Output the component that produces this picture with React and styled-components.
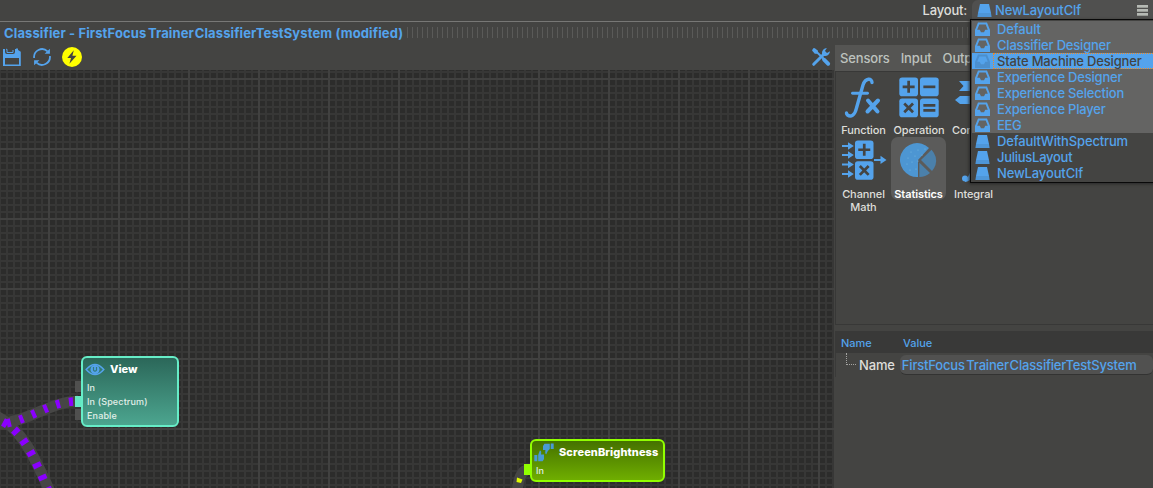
import React from "react";
import styled, { createGlobalStyle } from "styled-components";

const BLUE = "#54a3ec";

const Global = createGlobalStyle`
  * { box-sizing: border-box; }
  body { margin: 0; background: #444442; font-family: Inter, "Liberation Sans", sans-serif; overflow: hidden; }
  svg { display: block; flex: none; }
`;

const Window = styled.div`
  position: relative;
  display: flex;
  flex-direction: column;
  width: 1153px;
  height: 488px;
  overflow: hidden;
  background: #444442;
  color: #dededa;
`;

const Text = styled.span`
  white-space: nowrap;
  font-size: ${(p) => p.$size || 13}px;
  font-weight: ${(p) => p.$weight || 400};
  letter-spacing: ${(p) => p.$track || 0}px;
  color: ${(p) => p.$color || "inherit"};
`;

const Kern = styled.span`
  margin-left: ${(p) => p.$by}px;
`;

const LayoutBar = styled.header`
  display: flex;
  align-items: center;
  justify-content: flex-end;
  height: 22px;
  padding-bottom: 1px;
  border-bottom: 1px solid #787876;
`;

const LayoutSelect = styled.div`
  display: flex;
  align-items: center;
  width: 181px;
  height: 20px;
  margin-left: 5px;
  padding: 0 5px 0 5px;
  gap: 3px;
  border-radius: 6px 0 0 0;
  background: #50504f;
  color: ${BLUE};
  & > :last-child { margin-left: auto; }
`;

const TitleBar = styled.div`
  display: flex;
  align-items: center;
  height: 21px;
  padding-left: 4px;
`;

const Title = styled.div`
  width: 403px;
  white-space: nowrap;
  line-height: 20px;
`;

const Grip = styled.div`
  flex: 1;
  height: 11px;
  background: repeating-linear-gradient(to right, #5a5a58 0 1px, transparent 1px 5px);
`;

const Body = styled.main`
  display: flex;
  flex: 1;
  min-height: 0;
  padding-top: 1px;
`;

const EditorColumn = styled.section`
  display: flex;
  flex-direction: column;
  width: 835px;
`;

const Toolbar = styled.div`
  display: flex;
  align-items: center;
  height: 26px;
  padding: 0 4px 0 2px;
  gap: 10px;
  & > :last-child { margin-left: auto; }
`;

const Canvas = styled.div`
  position: relative;
  flex: 1;
  overflow: hidden;
  border-right: 1px solid #444442;
  background-color: #2c2c2b;
  background-image:
    linear-gradient(to right, #414140 2px, transparent 2px),
    linear-gradient(to bottom, #414140 2px, transparent 2px),
    linear-gradient(to right, #373736 2px, transparent 2px),
    linear-gradient(to bottom, #373736 2px, transparent 2px);
  background-size: 70px 70px, 70px 70px, 7px 7px, 7px 7px;
  background-position: 48px 0, 0 8px, 6px 0, 0 1px;
`;

const Wires = styled.svg`
  position: absolute;
  inset: 0;
`;

const Node = styled.div`
  position: absolute;
  left: ${(p) => p.$x}px;
  top: ${(p) => p.$y}px;
  width: ${(p) => p.$w}px;
  height: ${(p) => p.$h}px;
  padding: 0 0 0 4px;
  border: 2px solid ${(p) => p.$line};
  border-radius: 6px;
  background: linear-gradient(${(p) => p.$from}, ${(p) => p.$to});
  color: #fff;
`;

const NodeHead = styled.div`
  display: flex;
  align-items: center;
  height: 22px;
  gap: 5px;
  margin-left: -2px;
`;

const NodeRow = styled.div`
  display: flex;
  align-items: center;
  height: 14px;
  color: #e2efe9;
`;

const Port = styled.i`
  position: absolute;
  left: ${(p) => p.$x}px;
  top: ${(p) => p.$y}px;
  width: 7px;
  height: 11px;
  background: ${(p) => p.$color};
`;

const SideColumn = styled.aside`
  display: flex;
  flex-direction: column;
  flex: 1;
  min-width: 0;
  padding-top: 1px;
`;

const Tabs = styled.nav`
  display: flex;
  align-items: center;
  height: 26px;
  padding-left: 5px;
  gap: 11px;
  background: #555553;
  color: #bdc2be;
`;

const Palette = styled.div`
  display: grid;
  grid-template-columns: 55px 55px 55px;
  grid-template-rows: 65px 80px;
  align-content: start;
  height: 254px;
  border: 1px solid #383837;
  border-right: 0;
`;

const Tool = styled.div`
  display: flex;
  flex-direction: column;
  align-items: center;
  height: ${(p) => (p.$active ? "63px" : "auto")};
  padding-top: ${(p) => p.$top || 5}px;
  border-radius: 7px;
  background: ${(p) => (p.$active ? "#5b5b5a" : "transparent")};
`;

const ToolLabel = styled.div`
  margin-top: ${(p) => p.$gap || 5}px;
  padding-left: ${(p) => p.$indent || 0}px;
  font-size: 11px;
  line-height: 13px;
  font-weight: ${(p) => (p.$strong ? 600 : 500)};
  letter-spacing: ${(p) => p.$track || -0.1}px;
  text-align: center;
  white-space: pre;
  color: ${(p) => (p.$strong ? "#fff" : "#dededa")};
`;

const PropHeader = styled.div`
  display: grid;
  grid-template-columns: 62px 1fr;
  align-items: center;
  height: 22px;
  margin-top: 6px;
  padding: 1px 0 0 6px;
  background: #393938;
  color: ${BLUE};
`;

const PropRow = styled.div`
  display: flex;
  align-items: center;
  height: 24px;
  padding-left: 10px;
  border-left: 1px solid #3a3a39;
`;

const Branch = styled.i`
  align-self: flex-start;
  width: 10px;
  height: 12px;
  margin-right: 3px;
  border-left: 1px dotted #a5a5a3;
  border-bottom: 1px dotted #a5a5a3;
`;

const Field = styled.div`
  display: flex;
  align-items: center;
  flex: 1;
  height: 20px;
  margin-left: 5px;
  padding-left: 2px;
  border-bottom: 1px solid #333332;
  border-radius: 6px;
  background: #515150;
  color: ${BLUE};
`;

const Menu = styled.div`
  position: absolute;
  left: 970px;
  top: 19px;
  width: 190px;
  height: 164px;
  padding-top: 1px;
  border: 1px solid #090909;
  background: #444442;
  box-shadow: -1px 1px 3px #292928;
`;

const MenuItem = styled.div`
  display: flex;
  align-items: stretch;
  height: 16px;
  padding-left: 3px;
  line-height: 15px;
  background: ${(p) => (p.$active ? BLUE : p.$preset ? "#646463" : "#444442")};
  color: ${(p) => (p.$active ? "#444442" : BLUE)};
  margin-left: 1px;
`;

const MenuLabel = styled.div`
  flex: 1;
  height: 16px;
  margin-left: 3px;
  padding-left: 3px;
  border: 1px dotted ${(p) => (p.$active ? "#f08a25" : "transparent")};
  line-height: 13px;
`;

const Tray = ({ fill = BLUE, hole = "#646463" }) => (
  <svg width="15" height="16" viewBox="0 0 15 16">
    <path d="M3 1.5H12L15 9V15H0V9Z" fill={fill} />
    <path d="M4.3 3.5H10.7L12.8 8.8H10.3L9 11.3H6L4.7 8.8H2.2Z" fill={hole} />
  </svg>
);

const Disk = () => (
  <svg width="15" height="16" viewBox="0 0 15 16">
    <path d="M3 2H12L14 11H1Z" fill={BLUE} />
    <path d="M1 11H14L14.6 15H.4Z" fill="#4e96d8" />
  </svg>
);

const SaveIcon = () => (
  <svg width="20" height="20" viewBox="0 0 20 20">
    <path fillRule="evenodd" d="M1 2H3V5Q3 7 5 7H11Q13 7 13 5V2H14.5L18.8 4.7V19H1ZM3 11H17V17.5H3Z" fill={BLUE} />
    <path d="M4 2.3H5V5.5H11V3" fill="none" stroke={BLUE} strokeWidth="1" />
    <rect x="14" y="1.5" width="2" height="3.5" fill={BLUE} />
  </svg>
);

const RefreshIcon = () => (
  <svg width="20" height="20" viewBox="0 0 20 20" fill="none" stroke={BLUE} strokeWidth="1.8">
    <path d="M2.1 11A8 8 0 0 1 15.5 4.3M17.9 9A8 8 0 0 1 4.5 15.7" />
    <path d="M17.9 1.8V6.8H12.6ZM2.1 18.2V13.2H7.4Z" fill={BLUE} stroke="none" />
  </svg>
);

const BoltIcon = () => (
  <svg width="20" height="20" viewBox="0 0 20 20">
    <circle cx="10" cy="10" r="10" fill="#ffff00" />
    <path d="M11.8 3.3L5.3 11H9L7.4 16.7L14.5 8.7H10.4Z" fill="#444442" />
  </svg>
);

const ToolsIcon = () => (
  <svg width="20" height="20" viewBox="0 0 20 20">
    <path d="M2 1.8L7 6.2L14 13L18.2 17" stroke={BLUE} strokeWidth="2" fill="none" />
    <path d="M1 3.5L3.6 1L7 3.8L6.5 6.8L3.8 6.7Z" fill={BLUE} />
    <path d="M13 12.7L17.2 16.8" stroke={BLUE} strokeWidth="3.8" strokeLinecap="round" />
    <path d="M2.7 17.3L13.8 6.2" stroke={BLUE} strokeWidth="3" strokeLinecap="round" />
    <path d="M15.9 1A5 5 0 0 0 11 6.8L13.2 9A5 5 0 0 0 19 4.2L16 6L13.9 4Z" fill={BLUE} />
  </svg>
);

const MenuLines = () => (
  <svg width="11" height="12" viewBox="0 0 11 12" fill="#b5b9b4">
    <rect y="1" width="11" height="2.7" />
    <rect y="5" width="11" height="2.7" />
    <rect y="9" width="11" height="2.7" />
  </svg>
);

const FxIcon = () => (
  <svg width="40" height="42" viewBox="0 0 40 42" fill="none" stroke={BLUE} strokeWidth="3.4" strokeLinecap="round">
    <path d="M28 5.5C28 1 21.5 .5 19 8L12.5 31C11 38 7 40.5 3.5 38Q2.5 37 2.5 36" />
    <path d="M8.5 16.3H23.5" strokeWidth="2.9" />
    <path d="M24 23.5L33.5 34.5M34 23.5L23.5 34.5" strokeWidth="4" />
  </svg>
);

const Key = ({ x, y, size = 18, sign }) => {
  const c = size / 2;
  const marks = {
    plus: `M${c - 6} ${c}H${c + 6}M${c} ${c - 6}V${c + 6}`,
    minus: `M${c - 6} ${c}H${c + 6}`,
    times: `M${c - 4.4} ${c - 4.4}L${c + 4.4} ${c + 4.4}M${c + 4.4} ${c - 4.4}L${c - 4.4} ${c + 4.4}`,
    equals: `M${c - 6} ${c - 2.5}H${c + 6}M${c - 6} ${c + 2.5}H${c + 6}`,
  };
  return (
    <g transform={`translate(${x} ${y})`}>
      <rect width={size} height={size} rx="2.8" fill={BLUE} />
      <path d={marks[sign]} stroke="#444442" strokeWidth="2.7" />
    </g>
  );
};

const OperationIcon = () => (
  <svg width="40" height="42" viewBox="0 0 40 42">
    <Key x={0.3} y={0.5} size={18.7} sign="plus" />
    <Key x={21} y={0.5} size={18.7} sign="minus" />
    <Key x={0.3} y={21.5} size={18.7} sign="times" />
    <Key x={21} y={21.5} size={18.7} sign="equals" />
  </svg>
);

const ConditionIcon = () => (
  <svg width="40" height="42" viewBox="0 0 40 42" fill={BLUE}>
    <path d="M5 4H40V14H5L9.5 9ZM1 23L6 19H40V27H6Z" />
  </svg>
);

const ChannelIcon = () => (
  <svg width="46" height="40" viewBox="0 0 46 40">
    {[6, 15, 24.5, 34].map((y) => (
      <path key={y} d={`M1 ${y - 0.9}H7V${y - 3.7}L12.8 ${y}L7 ${y + 3.7}V${y + 0.9}H1Z`} fill={BLUE} />
    ))}
    <Key x={14} y={0.5} size={18.5} sign="plus" />
    <Key x={14} y={21.2} size={18.5} sign="times" />
    <path d="M33 19H39.5V15.8L45.5 20L39.5 24V21H33Z" fill={BLUE} />
  </svg>
);

const PieIcon = () => (
  <svg width="38" height="38" viewBox="0 0 38 38">
    <path d="M18 18L29 6A17 17 0 1 0 18 35Z" fill="#4d96d2" />
    <path d="M21 18L31.5 7.8Q38 15 35.5 23Q34.5 26 32 29Z" fill="#4b80aa" />
    <path d="M19.4 20.8L30 31Q25.5 35 19.4 35Z" fill="#4b80aa" />
    <g fill="#75b8df">
      {[[11,10],[18,8],[25,7],[8,16],[15,14],[22,13],[7,22],[12,20],[18,19],[10,28],[16,27]].map(([x, y]) => (
        <circle key={`${x}-${y}`} cx={x} cy={y} r=".6" />
      ))}
    </g>
  </svg>
);

const IntegralIcon = () => (
  <svg width="38" height="40" viewBox="0 0 38 40" fill="none" stroke={BLUE} strokeWidth="3.5">
    <circle cx="10" cy="36.5" r="3" fill={BLUE} stroke="none" />
    <path d="M10 38.2Q15 38 17 30L23 8Q25 1 31 5" />
  </svg>
);

const EyeIcon = () => (
  <svg width="20" height="13" viewBox="0 0 19 13">
    <path d="M.7 6.5Q9.5-3.7 18.3 6.5Q9.5 16.7.7 6.5Z" fill="#347a72" stroke={BLUE} strokeWidth="1.5" />
    <circle cx="9.5" cy="6.5" r="4.5" fill={BLUE} />
    <path d="M8 4V7.2Q9.5 9.3 11 7.2V4" fill="none" stroke="#317a80" strokeWidth="1.2" />
  </svg>
);

const ThumbsIcon = () => (
  <svg width="20" height="19" viewBox="0 0 20 19" fill="#499bd5">
    <path d="M10.5 .8H15.8V6L13.8 8L12.3 11.3Q10.8 11.3 11.4 7H9V3ZM16.7 .5H19.7V6H16.7Z" />
    <path d="M.3 12H3.3V18.3H.3ZM4.2 12L5.8 7.5Q7.8 7.5 7 11.5H10V16L8.7 18.3H4.2Z" />
  </svg>
);

const layouts = [
  ["Default", true, -0.15],
  ["Classifier Designer", true, -0.2],
  ["State Machine Designer", true, -0.17],
  ["Experience Designer", true, -0.2],
  ["Experience Selection", true, -0.2],
  ["Experience Player", true, -0.2],
  ["EEG", true, -0.4],
  ["DefaultWithSpectrum", false, -0.14],
  ["JuliusLayout", false, -0.27],
  ["NewLayoutClf", false, -0.14],
];

export default function App() {
  return (
    <Window>
      <Global />
      <LayoutBar>
        <Text $weight={500} $track={-0.2}>Layout:</Text>
        <LayoutSelect>
          <Disk />
          <Text $weight={500} $track={-0.14}>NewLayoutClf</Text>
          <MenuLines />
        </LayoutSelect>
      </LayoutBar>
      <TitleBar>
        <Title>
          <Text $weight={700} $color={BLUE} $track={0.12}>
            Classifier - FirstFocus<Kern $by={1.5}>Trainer</Kern><Kern $by={0.7}>Classifier</Kern>TestSystem (modified)
          </Text>
        </Title>
        <Grip />
      </TitleBar>
      <Body>
        <EditorColumn>
          <Toolbar>
            <SaveIcon />
            <RefreshIcon />
            <BoltIcon />
            <ToolsIcon />
          </Toolbar>
          <Canvas>
            <Wires width="834" height="418" fill="none">
              <g stroke="#464645" strokeWidth="11">
                <path d="M78 331C48 332 30 352 -4 354" />
                <path d="M-4 346C22 358 36 390 51 424" />
                <path d="M528 400C521 400 518 409 517 424" />
              </g>
              <g stroke="#8a00ff" strokeWidth="8.5">
                <path d="M73 331.5C47 333 30 350 3 354" strokeDasharray="4 9.2" />
                <path d="M3 352C24 363 34 388 48 420" strokeDasharray="5 8.4" />
              </g>
              <path d="M517 407.5L522.5 409.5L521 413L516.5 412Z" fill="#dffc00" />
            </Wires>
            <Port $x={75} $y={311} $color="#50504f" />
            <Port $x={75} $y={326} $color="#64e8c3" />
            <Port $x={75} $y={339} $color="#50504f" />
            <Port $x={524} $y={394} $color="#91ff00" />
            <Node $x={81} $y={286} $w={98} $h={71} $line="#66edc7" $from="#2b6759" $to="#4ca58f">
              <NodeHead>
                <EyeIcon />
                <Text $size={11} $weight={800}>View</Text>
              </NodeHead>
              <NodeRow><Text $size={9} $weight={500} $track={0.15}>In</Text></NodeRow>
              <NodeRow><Text $size={9} $weight={500} $track={0.15}>In (Spectrum)</Text></NodeRow>
              <NodeRow><Text $size={9} $weight={500} $track={0.15}>Enable</Text></NodeRow>
            </Node>
            <Node $x={530} $y={369} $w={135} $h={43} $line="#91ff00" $from="#457100" $to="#6fae00">
              <NodeHead>
                <ThumbsIcon />
                <Text $size={11} $weight={800} $track={0.1}>ScreenBrightness</Text>
              </NodeHead>
              <NodeRow><Text $size={9} $weight={500} $track={0.15}>In</Text></NodeRow>
            </Node>
          </Canvas>
        </EditorColumn>
        <SideColumn>
          <Tabs>
            <Text $weight={500} $track={-0.15}>Sensors</Text>
            <Text $weight={500} $track={-0.15}>Input</Text>
            <Text $weight={500} $track={-0.15}>Output</Text>
          </Tabs>
          <Palette>
            <Tool><FxIcon /><ToolLabel>Function</ToolLabel></Tool>
            <Tool><OperationIcon /><ToolLabel $indent={1}>Operation</ToolLabel></Tool>
            <Tool><ConditionIcon /><ToolLabel $indent={7}>Condition</ToolLabel></Tool>
            <Tool $top={3}><ChannelIcon /><ToolLabel $gap={8}>{"Channel\nMath"}</ToolLabel></Tool>
            <Tool $active $top={5}><PieIcon /><ToolLabel $strong $gap={8}>Statistics</ToolLabel></Tool>
            <Tool $top={5}><IntegralIcon /><ToolLabel $gap={6}>Integral</ToolLabel></Tool>
          </Palette>
          <PropHeader>
            <Text $size={11} $weight={500}>Name</Text>
            <Text $size={11} $weight={500}>Value</Text>
          </PropHeader>
          <PropRow>
            <Branch />
            <Text $weight={500} $track={-0.15}>Name</Text>
            <Field>
              <Text $weight={500} $track={-0.18}>
                FirstFocus<Kern $by={1.5}>Trainer</Kern><Kern $by={0.7}>Classifier</Kern>TestSystem
              </Text>
            </Field>
          </PropRow>
        </SideColumn>
      </Body>
      <Menu>
        {layouts.map(([name, preset, track], i) => (
          <MenuItem key={name} $preset={preset} $active={i === 2}>
            {preset ? <Tray fill={i === 2 ? "#4b8fce" : BLUE} hole={i === 2 ? BLUE : "#646463"} /> : <Disk />}
            <MenuLabel $active={i === 2}><Text $weight={500} $track={track}>{name}</Text></MenuLabel>
          </MenuItem>
        ))}
      </Menu>
    </Window>
  );
}
